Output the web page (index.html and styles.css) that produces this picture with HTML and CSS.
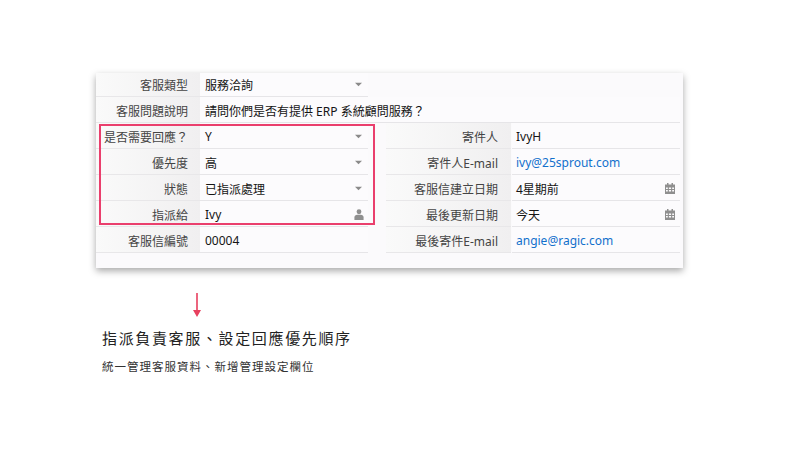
FILE: index.html
```html
<!DOCTYPE html>
<html lang="zh-Hant">
<head>
<meta charset="utf-8">
<title>客服</title>
<link rel="stylesheet" href="styles.css">
</head>
<body>
<main class="page">
  <section class="card">
    <div class="row first col-left"><div class="label">客服類型</div><div class="value">服務洽詢<svg class="caret" viewBox="0 0 8 5"><path d="M0 0.5h8L4 4.5z"/></svg></div></div>
    <div class="row wide"><div class="label">客服問題說明</div><div class="value">請問你們是否有提供 ERP 系統顧問服務？</div></div>
    <div class="columns">
      <div class="col-left">
        <div class="row"><div class="label">是否需要回應？</div><div class="value">Y<svg class="caret" viewBox="0 0 8 5"><path d="M0 0.5h8L4 4.5z"/></svg></div></div>
        <div class="row"><div class="label">優先度</div><div class="value">高<svg class="caret" viewBox="0 0 8 5"><path d="M0 0.5h8L4 4.5z"/></svg></div></div>
        <div class="row"><div class="label">狀態</div><div class="value">已指派處理<svg class="caret" viewBox="0 0 8 5"><path d="M0 0.5h8L4 4.5z"/></svg></div></div>
        <div class="row"><div class="label">指派給</div><div class="value">Ivy<svg class="icon" viewBox="0 0 10 12"><circle cx="5" cy="3" r="2.6"/><path d="M0 12V9.2C0 7.5 1.4 6.6 3 6.4h4c1.600.2 3 1.100 3 2.800V12z"/></svg></div></div>
        <div class="row"><div class="label">客服信編號</div><div class="value">00004</div></div>
      </div>
      <div class="col-right">
        <div class="row"><div class="label">寄件人</div><div class="value">IvyH</div></div>
        <div class="row"><div class="label">寄件人E-mail</div><div class="value link">ivy@25sprout.com</div></div>
        <div class="row"><div class="label">客服信建立日期</div><div class="value">4星期前<svg class="icon" viewBox="0 0 10 11"><path fill-rule="evenodd" d="M2 0h1.500v1.500h3V0H8v1.500h2V11H0V1.500h2zM1 4.500V6h1.800V4.500zm2.900 0V6h2.200V4.500zm3.300 0V6H9V4.500zM1 7v1.500h1.800V7zm2.900 0v1.500h2.200V7zm3.300 0v1.500H9V7z"/></svg></div></div>
        <div class="row"><div class="label">最後更新日期</div><div class="value">今天<svg class="icon" viewBox="0 0 10 11"><path fill-rule="evenodd" d="M2 0h1.500v1.500h3V0H8v1.500h2V11H0V1.500h2zM1 4.500V6h1.800V4.500zm2.900 0V6h2.200V4.500zm3.300 0V6H9V4.500zM1 7v1.500h1.800V7zm2.900 0v1.500h2.200V7zm3.300 0v1.500H9V7z"/></svg></div></div>
        <div class="row"><div class="label">最後寄件E-mail</div><div class="value link">angie@ragic.com</div></div>
      </div>
    </div>
    <div class="highlight"></div>
  </section>
  <section class="note">
    <svg class="arrow" viewBox="0 0 8 24"><path d="M3.200 0h1.600v17H8l-4 7-4-7h3.200z"/></svg>
    <h1 class="title">指派負責客服、設定回應優先順序</h1>
    <p class="sub">統一管理客服資料、新增管理設定欄位</p>
  </section>
</main>
</body>
</html>
```
FILE: styles.css
```css
* { box-sizing: border-box; }
html, body { margin: 0; padding: 0; background: #fff; }
body {
  width: 800px;
  height: 450px;
  overflow: hidden;
  font-family: "Noto Sans", "Noto Sans CJK TC", sans-serif;
}
.page { padding: 73px 0 0 96px; }
.card {
  position: relative;
  width: 587px;
  height: 195px;
  background: #fbfafc;
  box-shadow: 0 3px 7px rgba(0, 0, 0, 0.34);
}
.row {
  display: flex;
  height: 26px;
  align-items: stretch;
}
.row.first { height: 24px; }
.label {
  flex: none;
  display: flex;
  align-items: center;
  justify-content: flex-end;
  padding-top: 2px;
  padding-right: 12px;
  font-size: 12px;
  color: #444;
  background: linear-gradient(90deg, #fafafa 0%, #f0eff0 100%);
  border-bottom: 1px solid #e8e7e9;
  white-space: nowrap;
}
.value {
  flex: 1;
  display: flex;
  align-items: center;
  justify-content: space-between;
  padding: 2px 5px 0 4px;
  font-size: 12px;
  color: #151515;
  background: #fcfbfd;
  border-bottom: 1px solid #e6e5e8;
  white-space: nowrap;
}
.row.first .label, .row.first .value { padding-top: 0; }
.link { color: #1270cc; }
.col-left { width: 272px; flex: none; }
.col-left .label, .wide .label { width: 104px; }
.col-left .value, .wide .value { padding-left: 5px; padding-right: 4px; }
.wide { width: 584px; }
.columns { display: flex; gap: 18px; }
.col-right { width: 294px; flex: none; }
.col-right .label { width: 125px; padding-right: 13px; }
.col-right .value { margin-left: 1px; }
.caret { width: 7px; height: 5px; fill: #8a8a8a; margin-right: 2px; }
.icon { width: 10px; height: 11px; fill: #8f8f8f; }
.highlight {
  position: absolute;
  left: 3px;
  top: 51px;
  width: 276px;
  height: 101px;
  border: 2px solid #ea3f6d;
}
.note { padding: 25px 0 0 6px; }
.arrow { display: block; width: 8px; height: 24px; margin-left: 91px; fill: #e8405f; }
.title {
  margin: 10px 0 0;
  font-size: 15px;
  line-height: 22px;
  font-weight: 400;
  letter-spacing: 1.65px;
  color: #222;
  font-family: "Noto Sans CJK TC", sans-serif;
}
.sub {
  margin: 9px 0 0;
  font-size: 11.500px;
  line-height: 16px;
  letter-spacing: 1px;
  color: #333;
  font-family: "Noto Sans CJK TC", sans-serif;
}
```
